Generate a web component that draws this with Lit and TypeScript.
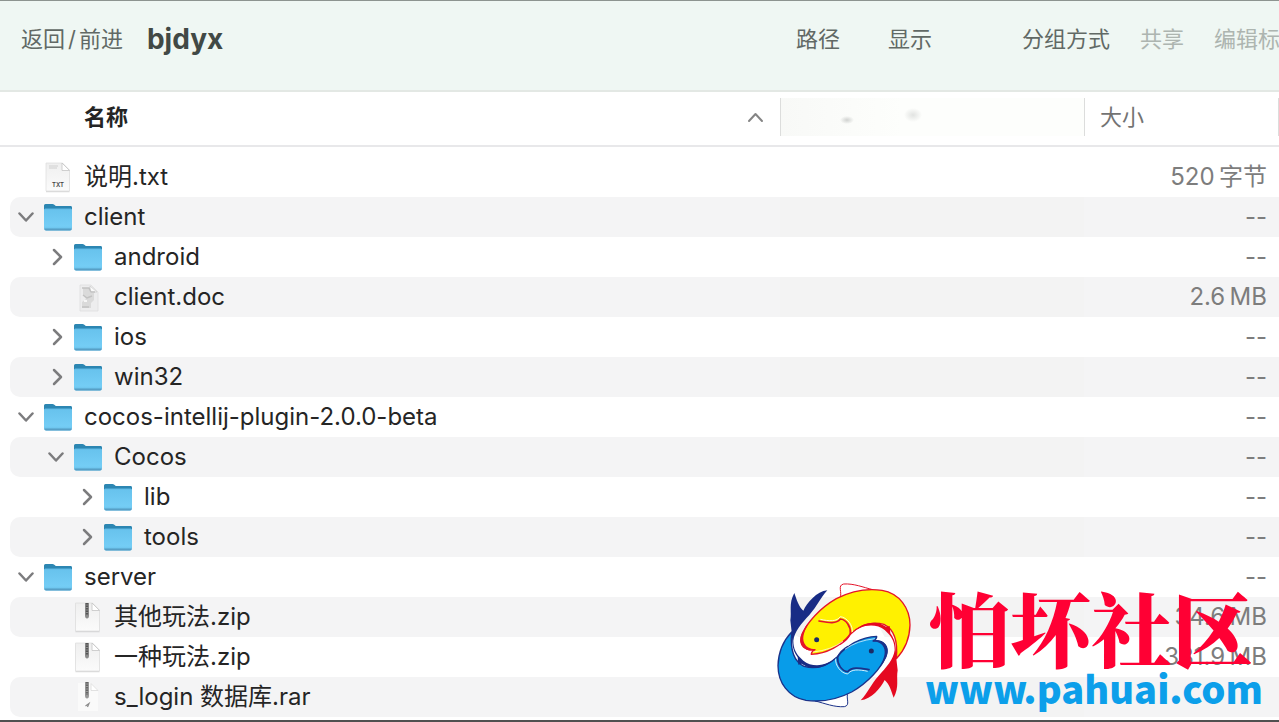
import { LitElement, html, css, svg, nothing } from "lit";
import { customElement, property, state } from "lit/decorators.js";
import { classMap } from "lit/directives/class-map.js";
import { styleMap } from "lit/directives/style-map.js";

type Kind = "folder" | "txt" | "doc" | "zip" | "rar";

interface Entry {
  id: string;
  name: string;
  kind: Kind;
  level: number;
  parent?: string;
  size: string;
}

const ENTRIES: Entry[] = [
  { id: "readme", name: "说明.txt", kind: "txt", level: 0, size: "520\u2009字节" },
  { id: "client", name: "client", kind: "folder", level: 0, size: "--" },
  { id: "android", name: "android", kind: "folder", level: 1, parent: "client", size: "--" },
  { id: "clientdoc", name: "client.doc", kind: "doc", level: 1, parent: "client", size: "2.6\u2009MB" },
  { id: "ios", name: "ios", kind: "folder", level: 1, parent: "client", size: "--" },
  { id: "win32", name: "win32", kind: "folder", level: 1, parent: "client", size: "--" },
  { id: "plugin", name: "cocos-intellij-plugin-2.0.0-beta", kind: "folder", level: 0, size: "--" },
  { id: "cocos", name: "Cocos", kind: "folder", level: 1, parent: "plugin", size: "--" },
  { id: "lib", name: "lib", kind: "folder", level: 2, parent: "cocos", size: "--" },
  { id: "tools", name: "tools", kind: "folder", level: 2, parent: "cocos", size: "--" },
  { id: "server", name: "server", kind: "folder", level: 0, size: "--" },
  { id: "zip1", name: "其他玩法.zip", kind: "zip", level: 1, parent: "server", size: "34.6\u2009MB" },
  { id: "zip2", name: "一种玩法.zip", kind: "zip", level: 1, parent: "server", size: "381.9\u2009MB" },
  { id: "rar", name: "s_login 数据库.rar", kind: "rar", level: 1, parent: "server", size: "" },
];

@customElement("file-icon")
export class FileIcon extends LitElement {
  @property() kind: Kind = "folder";

  static styles = css`
    :host { display: block; width: 30px; height: 34px; }
    svg { display: block; }
  `;

  private page(x: number) {
    return svg`
      <path d="M${x} 3.500H19.500L26.500 10.500V31.500H${x}Z" fill="#bdbdbd" opacity=".55" transform="translate(0 .8)"/>
      <path d="M${x} 3H19.500L26.500 10V31H${x}Z" fill="url(#paper)" stroke="#dcdcdc" stroke-width=".7"/>
      <path d="M19 3V10.500H26.500Z" fill="#fff" stroke="#c4c4c4" stroke-width=".8"/>`;
  }

  private shape() {
    switch (this.kind) {
      case "folder":
        return svg`
          <path d="M1 5.500Q1 4 2.500 4H9.500Q10.500 4 11.300 4.800L12.800 6H28Q29 6 29 7.500V13H1Z" fill="#2c86b2"/>
          <path d="M1 10Q1 8.800 2.200 8.800H27.800Q29 8.800 29 10V28Q29 30.500 27 30.500H3Q1 30.500 1 28Z" fill="url(#front)"/>
          <path d="M1.300 28.500Q1.500 30.500 3 30.500H27Q28.600 30.500 28.800 28.500Z" fill="#579fc6"/>
          <path d="M2 9.200H28" stroke="#62bde6" stroke-width=".8"/>`;
      case "txt":
        return svg`${this.page(3)}
          <path d="M6 6H15M6 8H14" stroke="#cfcfcf" stroke-width="1.200"/>
          <text x="15" y="27" text-anchor="middle" font-family="Inter, sans-serif" font-weight="600" font-size="6" fill="#444">TXT</text>`;
      case "doc":
        return svg`
          <path d="M7 5H18L25 12V31H7Z" fill="#ededee" stroke="#dedede" stroke-width=".8"/>
          <path d="M17 6V12H24Z" fill="#fafafa" stroke="#cfcfcf" stroke-width=".8"/>
          <path d="M10 8H17V13H21V20L18 23V28H9V22L13 19L10 15Z" fill="#dadada"/>
          <path d="M9 8H16L18 12H22M10 15L14 18L19 16M9 27H16" fill="none" stroke="#c2c2c2" stroke-width="1.500"/>
          <path d="M11 20H14V22H11Z" fill="#f6f6f6"/>`;
      case "zip":
        return svg`${this.page(2.5)}
          <path d="M12 3H16V15.500Q16 18.500 14 18.500Q12 18.500 12 15.500Z" fill="#8b8b8b"/>
          <path d="M14 3V15" stroke="#555" stroke-width="2.200" stroke-dasharray="1.500 1"/>`;
      default:
        return svg`
          <path d="M5 3H18L25 10V31H5Z" fill="#fafafa"/>
          <path d="M18 3.500V10.500H25Z" fill="#fff" stroke="#d9d9d9" stroke-width=".8"/>
          <path d="M12 2H16V15.500Q16 18.500 14 18.500Q12 18.500 12 15.500Z" fill="#999"/>
          <path d="M14 2V15" stroke="#666" stroke-width="2.200" stroke-dasharray="1.500 1"/>
          <path d="M12.500 26L16 23.500L14.500 27" stroke="#8b8b8b" stroke-width="1.200" fill="none"/>`;
    }
  }

  render() {
    return html`<svg width="30" height="34" viewBox="0 0 30 34" aria-hidden="true">
      <defs>
        <linearGradient id="front" x2="0" y2="1">
          <stop offset="0" stop-color="#67c2ed"/><stop offset=".8" stop-color="#74cdf5"/><stop offset="1" stop-color="#65bbe5"/>
        </linearGradient>
        <linearGradient id="paper" x2="0" y2="1">
          <stop offset="0" stop-color="#efefef"/><stop offset="1" stop-color="#fbfbfb"/>
        </linearGradient>
      </defs>
      ${this.shape()}
    </svg>`;
  }
}

@customElement("site-mark")
export class SiteMark extends LitElement {
  static styles = css`
    :host { display: flex; align-items: flex-end; gap: 14px; }
    svg { display: block; flex: none; }
    .words { display: flex; flex-direction: column; white-space: nowrap; }
    .title {
      color: #ff0034;
      font: 900 81px/80px "Noto Serif CJK SC", "Noto Sans CJK SC", sans-serif;
      padding-left: 4px;
    }
    .link {
      color: #0c9fea;
      text-decoration: none;
      font: 900 38px/44px "Noto Sans CJK SC", "Noto Sans", sans-serif;
    }
  `;

  private fish(fill: string, line: string, tail: string) {
    return svg`
      <path d="M211 84C219 68 202 46 222 42C252 40 281 52 309 59Q256 63 215 84Z" fill="#fff" stroke=${line} stroke-width="3"/>
      <path d="M136 239C105 244 86 220 98 192C112 158 150 115 200 86C250 60 300 56 337 61C390 70 421 115 421 165C420 205 405 240 380 266C384 225 378 180 343 163C304 153 269 167 243 192C220 219 180 250 125 253C124 245 130 243 136 239Z"
        fill=${fill} stroke=${line} stroke-width="4" stroke-linejoin="round"/>
      <path d="M152 148C178 154 202 155 212 140C232 142 250 166 248 186" fill="none" stroke="#fff" stroke-width="2.500"/>
      <path d="M148 153C176 158 199 163 212 147C229 148 244 170 242 190Q235 209 212 222" fill="none" stroke=${line} stroke-width="5" stroke-linecap="round"/>
      <path d="M136 241C98 246 82 218 97 188Q106 168 123 151C104 180 96 203 104 220Q112 237 136 238Z" fill=${line}/>
      <path d="M130 246Q185 240 220 214" fill="none" stroke="#fff" stroke-width="2"/>
      <path d="M243 194C276 153 322 150 350 171L360 168L362 190Q376 208 378 232L380 266L384 301C379 327 390 351 372 383C365 363 359 342 345 330C334 353 305 388 273 391C295 367 303 344 327 317C350 292 372 268 375 240C375 216 366 202 357 192L345 180C318 158 270 163 243 194Z" fill=${tail}/>
      <circle cx="141" cy="209" r="7.500" fill="#1b2b66"/>`;
  }

  render() {
    return html`
      <svg width="136" height="128" viewBox="16 36 408 384" aria-hidden="true">
        <path d="M68 190L110 215L190 90L300 120L378 260L330 300L260 350L120 330Z" fill="#fff"/>
        <g transform="rotate(180 223 226)">${this.fish("#089ce9", "#1b3289", "#182c85")}</g>
        ${this.fish("#fff100", "#e5142a", "#e50920")}
      </svg>
      <div class="words">
        <span class="title">怕坏社区</span>
        <a class="link" href="#">www.pahuai.com</a>
      </div>`;
  }
}

@customElement("app-root")
export class AppRoot extends LitElement {
  @state() private closed = new Set<string>(["android", "ios", "win32", "lib", "tools"]);

  static styles = css`
    :host {
      display: block;
      position: relative;
      overflow: hidden;
      min-height: 100vh;
      box-sizing: border-box;
      border-top: 1px solid #8d9490;
      border-bottom: 2px solid #505050;
      background: #fff;
      color: #252525;
      font: 24px/40px Inter, "Noto Sans CJK SC", sans-serif;
    }
    button {
      border: 0;
      padding: 0;
      background: none;
      color: inherit;
      font: inherit;
      white-space: nowrap;
    }
    .toolbar {
      display: flex;
      align-items: center;
      height: 91px;
      padding: 0 0 14px 21px;
      border-bottom: 2px solid #e3e8e4;
      box-sizing: border-box;
      background: #eff7f3;
      color: #616965;
      font-size: 22px;
      overflow: hidden;
    }
    .slash { padding: 0 3px; }
    .title {
      flex: 1;
      margin: 0 0 0 24px;
      color: #414945;
      font-size: 28px;
      font-weight: 700;
      line-height: 40px;
    }
    .actions { display: flex; gap: 30px; margin-right: -23px; }
    .group { display: flex; gap: 48px; margin-right: 60px; }
    .actions button:disabled { color: #adb5b0; }
    table {
      width: 100%;
      table-layout: fixed;
      border-collapse: separate;
      border-spacing: 0;
    }
    .date { width: 304px; }
    .size { width: 195px; }
    th {
      height: 47px;
      padding: 6px 0 0;
      border-bottom: 2px solid #e8e8ea;
      vertical-align: top;
      text-align: left;
      font-size: 22px;
      font-weight: 400;
      color: #737373;
    }
    .head { display: flex; align-items: center; justify-content: space-between; height: 38px; }
    .head.name { padding: 0 16px 0 84px; color: #252525; }
    .head.name button { font-weight: 700; }
    .head.rule { border-left: 1px solid #dcdddc; padding-left: 15px; }
    .head.last { border-right: 1px solid #dcdddc; }
    .head.blank {
      padding: 0;
      background:
        radial-gradient(ellipse 7px 4px at 66px 22px, #d0d2d0, transparent),
        radial-gradient(ellipse 9px 7px at 132px 17px, #e1e3e1, transparent),
        linear-gradient(90deg, #f8f9f7, #fdfefc 40%, #fdfefc);
    }
    .spacer td { height: 10px; padding: 0; }
    td { height: 40px; padding: 0; white-space: nowrap; }
    .cell { display: flex; align-items: center; height: 40px; margin-left: 10px; border-radius: 10px 0 0 10px; }
    .striped .cell, .striped .stat { background: #f4f4f5; }
    .striped .when { background: #f3f3f3; }
    .twist { width: 16px; height: 40px; margin-right: 9px; flex: none; display: flex; align-items: center; }
    .twist svg { display: block; }
    .label { margin-left: 11px; white-space: pre; }
    .stat { padding-right: 12px; text-align: right; color: #7d7d7d; }
    .mark { position: absolute; right: 16px; bottom: 10px; }
  `;

  private toggle(id: string) {
    const next = new Set(this.closed);
    if (!next.delete(id)) next.add(id);
    this.closed = next;
  }

  private visible(entry: Entry): boolean {
    if (!entry.parent) return true;
    if (this.closed.has(entry.parent)) return false;
    const parent = ENTRIES.find((e) => e.id === entry.parent);
    return parent ? this.visible(parent) : true;
  }

  private chevron(open: boolean) {
    return html`<svg width="16" height="18" viewBox="0 0 16 18" aria-hidden="true">
      <path d=${open ? "M1.500 5.500L8 12.500L14.500 5.500" : "M6 2L13 9L6 16"}
        fill="none" stroke="#7c7c7e" stroke-width="2.500" stroke-linecap="round" stroke-linejoin="round"/>
    </svg>`;
  }

  private row(entry: Entry, index: number) {
    const open = !this.closed.has(entry.id);
    return html`<tr class=${classMap({ striped: index % 2 === 1 })}>
      <td>
        <div class="cell" style=${styleMap({ paddingLeft: `${8 + entry.level * 30}px` })}>
          ${entry.kind === "folder"
            ? html`<button class="twist" aria-label=${entry.name} aria-expanded=${open ? "true" : "false"}
                @click=${() => this.toggle(entry.id)}>${this.chevron(open)}</button>`
            : html`<span class="twist">${nothing}</span>`}
          <file-icon .kind=${entry.kind}></file-icon>
          <span class="label">${entry.name}</span>
        </div>
      </td>
      <td class="when"></td>
      <td class="stat">${entry.size}</td>
    </tr>`;
  }

  render() {
    return html`
      <header class="toolbar">
        <button>返回<span class="slash">/</span>前进</button>
        <h1 class="title">bjdyx</h1>
        <nav class="actions">
          <div class="group">
            <button>路径</button>
            <button>显示</button>
          </div>
          <button>分组方式</button>
          <button disabled>共享</button>
          <button disabled>编辑标签</button>
        </nav>
      </header>
      <table>
        <colgroup><col /><col class="date" /><col class="size" /></colgroup>
        <thead>
          <tr>
            <th aria-sort="ascending">
              <div class="head name">
                <button>名称</button>
                <svg width="17" height="12" viewBox="0 0 17 12" aria-hidden="true">
                  <path d="M2 10L8.500 3L15 10" fill="none" stroke="#858585" stroke-width="2" stroke-linecap="round" stroke-linejoin="round"/>
                </svg>
              </div>
            </th>
            <th><div class="head rule blank"></div></th>
            <th><div class="head rule last"><button>大小</button></div></th>
          </tr>
        </thead>
        <tbody>
          <tr class="spacer"><td colspan="3"></td></tr>
          ${ENTRIES.filter((e) => this.visible(e)).map((e, i) => this.row(e, i))}
        </tbody>
      </table>
      <site-mark class="mark"></site-mark>`;
  }
}
